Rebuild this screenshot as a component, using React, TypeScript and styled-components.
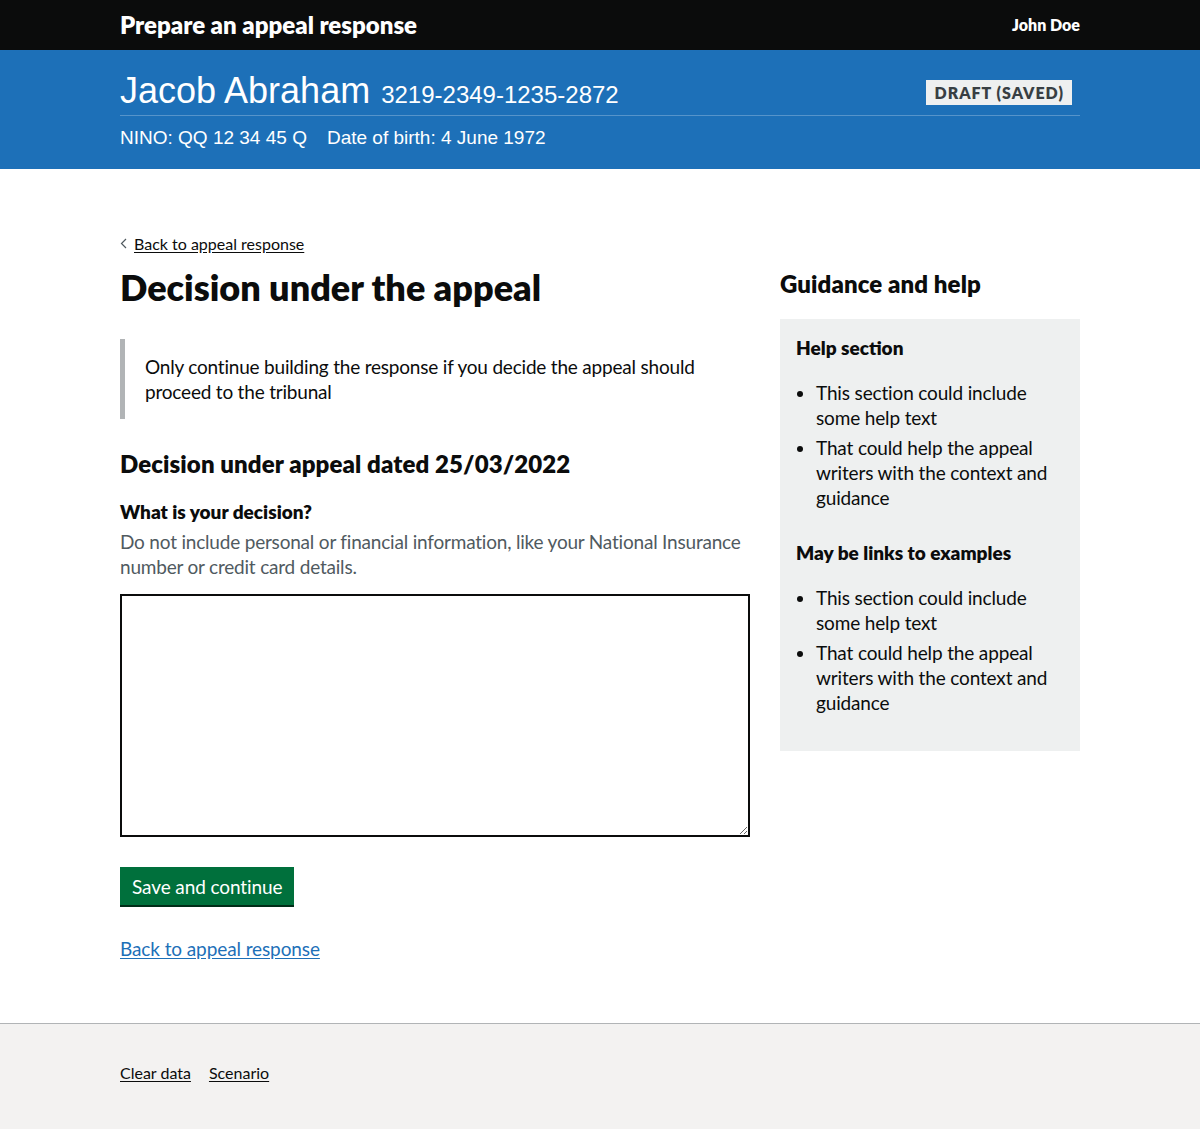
import React from "react";
import styled, { createGlobalStyle } from "styled-components";

const GlobalStyle = createGlobalStyle`
  html, body { margin: 0; padding: 0; background: #fff; }
  body { font-family: Lato, "Noto Sans", sans-serif; color: #0b0c0c; }
  * { box-sizing: border-box; }
`;

const BODY = `Lato, "Noto Sans", sans-serif`;
const ARIAL = `"Liberation Sans", Arial, sans-serif`;

const Page = styled.div`
  display: flex;
  flex-direction: column;
  min-height: 1129px;
`;

const TopBar = styled.header`
  background: #0b0c0c;
  height: 50px;
`;

const Container = styled.div`
  width: 960px;
  margin: 0 auto;
`;

const TopInner = styled(Container)`
  display: flex;
  justify-content: space-between;
  align-items: center;
  height: 50px;
`;

const ServiceName = styled.div`
  color: #fff;
  font-family: ${BODY};
  font-weight: 800;
  font-size: 24px;
  letter-spacing: 0;
  margin-top: -2px;
`;

const UserName = styled.div`
  color: #fff;
  font-family: ${BODY};
  font-weight: 800;
  font-size: 16px;
  margin-top: -2px;
`;

const Banner = styled.section`
  background: #1d70b8;
  height: 119px;
  color: #fff;
  font-family: ${ARIAL};
`;

const BannerTop = styled.div`
  display: flex;
  justify-content: space-between;
  align-items: flex-start;
  height: 66px;
  padding-top: 20px;
  border-bottom: 1px solid #5694ca;
`;

const PersonName = styled.h1`
  margin: 0;
  font-weight: 400;
  font-size: 36px;
  line-height: 41px;
  display: flex;
  align-items: baseline;
  gap: 11px;
`;

const PersonId = styled.span`
  font-size: 24px;
`;

const Tag = styled.strong`
  background: #eef0f0;
  color: #383f43;
  font-family: ${BODY};
  font-weight: 800;
  font-size: 16px;
  line-height: 18px;
  letter-spacing: 1px;
  text-transform: uppercase;
  padding: 4px 8px 3px;
  margin: 10px 8px 0 0;
`;

const BannerMeta = styled.div`
  display: flex;
  gap: 20px;
  font-size: 19px;
  padding-top: 11px;
`;

const Main = styled.main`
  flex: 1;
  padding: 64px 0 60px;
`;

const Grid = styled(Container)`
  display: grid;
  grid-template-columns: 630px 300px;
  column-gap: 30px;
`;

const BackLink = styled.a`
  display: inline-flex;
  align-items: center;
  gap: 7px;
  font-family: ${BODY};
  font-size: 16px;
  color: #0b0c0c;
  text-decoration: underline;
  text-underline-offset: 2px;
`;

const H1 = styled.h1`
  margin: 14px 0 32px;
  font-family: ${BODY};
  font-weight: 800;
  font-size: 36px;
  line-height: 40px;
`;

const Inset = styled.div`
  border-left: 5px solid #b1b4b6;
  padding: 15px 20px;
  font-family: ${BODY};
  font-size: 19px;
  line-height: 25px;
  letter-spacing: -0.2px;
  margin-bottom: 30px;
`;

const H2 = styled.h2<{ $mb?: number }>`
  margin: 0 0 ${(p) => p.$mb ?? 20}px;
  font-family: ${BODY};
  font-weight: 800;
  font-size: 24px;
  line-height: 30px;
  letter-spacing: 0.1px;
`;

const Label = styled.label`
  display: block;
  font-family: ${BODY};
  font-weight: 800;
  font-size: 19px;
  line-height: 25px;
  margin-bottom: 5px;
`;

const Hint = styled.div`
  font-family: ${BODY};
  font-size: 19px;
  line-height: 25px;
  letter-spacing: -0.2px;
  color: #505a5f;
  margin-bottom: 15px;
`;

const TextArea = styled.textarea`
  display: block;
  width: 630px;
  height: 243px;
  border: 2px solid #0b0c0c;
  border-radius: 0;
  padding: 5px;
  font-family: ${BODY};
  font-size: 19px;
  margin: 0 0 30px;
`;

const Button = styled.button`
  display: block;
  background: #00703c;
  color: #fff;
  border: 0;
  border-radius: 0;
  box-shadow: 0 2px 0 #002d18;
  font-family: ${BODY};
  font-size: 19px;
  line-height: 19px;
  letter-spacing: -0.1px;
  padding: 10px 12px 9px;
  height: 38px;
  margin-bottom: 32px;
  cursor: pointer;
`;

const BlueLink = styled.a`
  font-family: ${BODY};
  font-size: 19px;
  letter-spacing: -0.1px;
  color: #1d70b8;
  text-decoration: underline;
  text-underline-offset: 2px;
`;

const Side = styled.aside`
  padding-top: 36px;
`;

const HelpBox = styled.div`
  background: #eef0f0;
  padding: 16px 16px 31px;
  font-family: ${BODY};
`;

const HelpHeading = styled.h3`
  margin: 0 0 20px;
  font-size: 19px;
  line-height: 25px;
  font-weight: 800;
`;

const HelpList = styled.ul`
  margin: 0 0 30px;
  padding-left: 20px;
  font-size: 19px;
  line-height: 25px;
  letter-spacing: -0.15px;
  &:last-child { margin-bottom: 0; }
  li { margin-bottom: 5px; }
`;

const Footer = styled.footer`
  background: #f3f2f1;
  border-top: 1px solid #b1b4b6;
  height: 106px;
`;

const FooterLinks = styled(Container)`
  display: flex;
  gap: 18px;
  padding-top: 39px;
`;

const FooterLink = styled.a`
  font-family: ${BODY};
  font-size: 16px;
  color: #0b0c0c;
  text-decoration: underline;
  text-underline-offset: 2px;
`;

const Chevron = () => (
  <svg width="7" height="11" viewBox="0 0 7 11" aria-hidden>
    <path d="M6 1 L1.5 5.5 L6 10" fill="none" stroke="#505a5f" strokeWidth="1.2" />
  </svg>
);

const items = [
  "This section could include some help text",
  "That could help the appeal writers with the context and guidance",
];

export default function App() {
  return (
    <Page>
      <GlobalStyle />
      <TopBar>
        <TopInner>
          <ServiceName>Prepare an appeal response</ServiceName>
          <UserName>John Doe</UserName>
        </TopInner>
      </TopBar>
      <Banner>
        <Container>
          <BannerTop>
            <PersonName>
              Jacob Abraham <PersonId>3219-2349-1235-2872</PersonId>
            </PersonName>
            <Tag>Draft (saved)</Tag>
          </BannerTop>
          <BannerMeta>
            <span>NINO: QQ 12 34 45 Q</span>
            <span>Date of birth: 4 June 1972</span>
          </BannerMeta>
        </Container>
      </Banner>
      <Main>
        <Grid>
          <div>
            <BackLink href="#">
              <Chevron />
              Back to appeal response
            </BackLink>
            <H1>Decision under the appeal</H1>
            <Inset>
              Only continue building the response if you decide the appeal should proceed to the tribunal
            </Inset>
            <H2>Decision under appeal dated 25/03/2022</H2>
            <Label htmlFor="decision">What is your decision?</Label>
            <Hint>
              Do not include personal or financial information, like your National Insurance number or credit card details.
            </Hint>
            <TextArea id="decision" />
            <Button>Save and continue</Button>
            <BlueLink href="#">Back to appeal response</BlueLink>
          </div>
          <Side>
            <H2 $mb={20}>Guidance and help</H2>
            <HelpBox>
              <HelpHeading>Help section</HelpHeading>
              <HelpList>
                {items.map((t) => (
                  <li key={t}>{t}</li>
                ))}
              </HelpList>
              <HelpHeading>May be links to examples</HelpHeading>
              <HelpList>
                {items.map((t) => (
                  <li key={t + "2"}>{t}</li>
                ))}
              </HelpList>
            </HelpBox>
          </Side>
        </Grid>
      </Main>
      <Footer>
        <FooterLinks>
          <FooterLink href="#">Clear data</FooterLink>
          <FooterLink href="#">Scenario</FooterLink>
        </FooterLinks>
      </Footer>
    </Page>
  );
}
